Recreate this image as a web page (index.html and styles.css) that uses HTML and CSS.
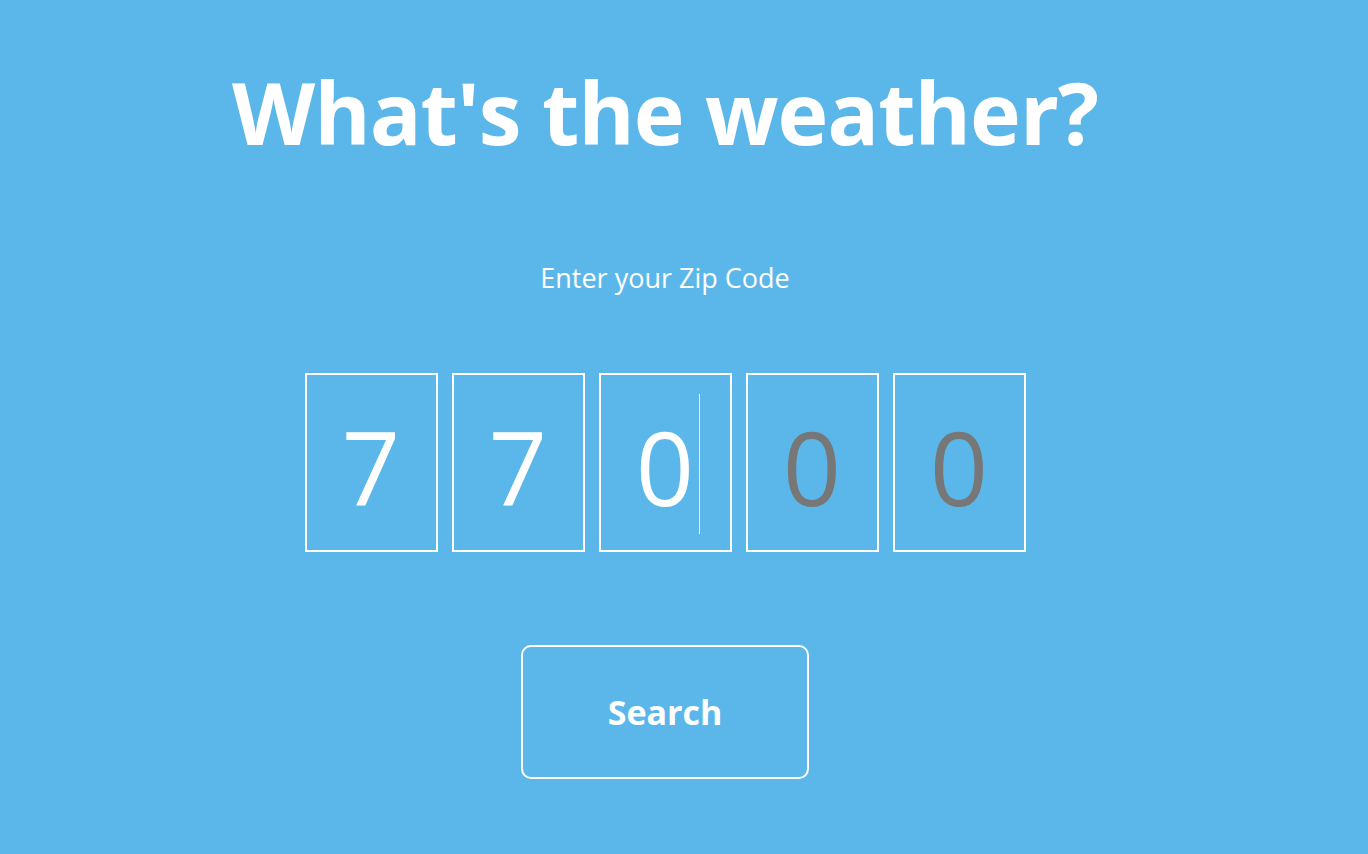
FILE: index.html
```html
<!DOCTYPE html>
<html lang="en">
<head>
<meta charset="utf-8">
<title>What's the weather?</title>
<link rel="stylesheet" href="styles.css">
</head>
<body>
<main class="page">
  <h1 class="title">What's the weather?</h1>
  <p class="label">Enter your Zip Code</p>
  <div class="zip">
    <div class="digit filled">7</div>
    <div class="digit filled">7</div>
    <div class="digit filled active">0<span class="caret"></span></div>
    <div class="digit placeholder">0</div>
    <div class="digit placeholder">0</div>
  </div>
  <button class="search" type="button">Search</button>
</main>
</body>
</html>
```
FILE: styles.css
```css
html, body {
  margin: 0;
  padding: 0;
  background: #5bb7ea;
  height: 100%;
}
body {
  font-family: "Open Sans", "Noto Sans", sans-serif;
  color: #fff;
}
.page {
  width: 1330px;
  display: flex;
  flex-direction: column;
  align-items: center;
}
.title {
  margin: 52px 0 0;
  font-size: 86px;
  font-weight: 700;
  line-height: 120px;
  letter-spacing: -1px;
}
.label {
  margin: 89px 0 0;
  font-size: 27px;
  line-height: 34px;
}
.zip {
  margin-top: 78px;
  display: flex;
  gap: 14px;
}
.digit {
  position: relative;
  width: 129px;
  height: 167px;
  padding-top: 8px;
  border: 2px solid #fff;
  display: flex;
  align-items: center;
  justify-content: center;
  font-size: 102px;
  line-height: 1;
}
.digit.placeholder {
  color: #777;
}
.caret {
  position: absolute;
  left: 98px;
  top: 19px;
  width: 1px;
  height: 140px;
  background: #fff;
}
.search {
  margin-top: 93px;
  width: 288px;
  height: 134px;
  border: 2px solid #fff;
  border-radius: 10px;
  background: transparent;
  color: #fff;
  font-family: "Open Sans", "Noto Sans", sans-serif;
  font-weight: 700;
  font-size: 34px;
  cursor: pointer;
}
```
